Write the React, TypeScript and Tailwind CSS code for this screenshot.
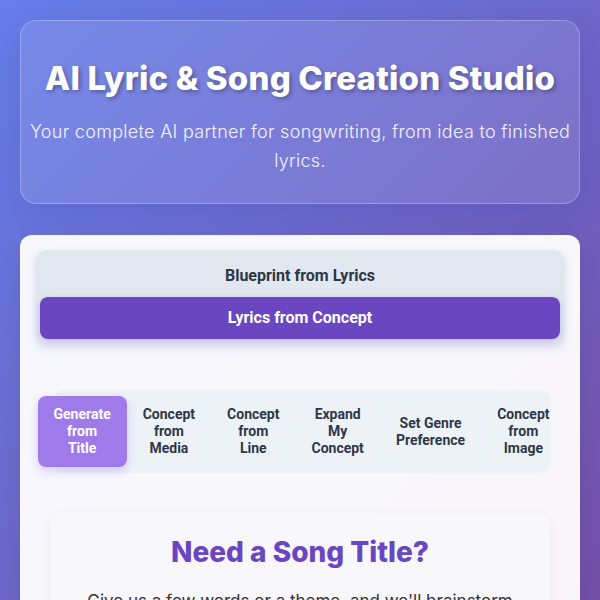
import React from "react";

const modes = ["Blueprint from Lyrics", "Lyrics from Concept"];

const tools = [
  "Generate from Title",
  "Concept from Media",
  "Concept from Line",
  "Expand My Concept",
  "Set Genre Preference",
  "Concept from Image",
];

const toolLines: Record<string, string[]> = {
  "Generate from Title": ["Generate", "from", "Title"],
  "Concept from Media": ["Concept", "from", "Media"],
  "Concept from Line": ["Concept", "from", "Line"],
  "Expand My Concept": ["Expand", "My", "Concept"],
  "Set Genre Preference": ["Set Genre", "Preference"],
  "Concept from Image": ["Concept", "from", "Image"],
};

export default function App() {
  const activeMode = "Lyrics from Concept";
  const activeTool = "Generate from Title";

  return (
    <div className="min-h-screen bg-[linear-gradient(135deg,#667eea_0%,#764ba2_100%)] px-5 pt-5 pb-10 font-['Inter',sans-serif]">
      <header className="rounded-2xl border border-white/25 bg-white/10 px-[6px] pt-[37px] pb-[28px] text-center shadow-[0_8px_32px_rgba(31,38,135,0.15)]">
        <h1 className="text-[33px] font-extrabold leading-[40px] tracking-[0.2px] text-white [text-shadow:2px_2px_4px_rgba(0,0,0,0.3)]">
          AI Lyric &amp; Song Creation Studio
        </h1>
        <p className="mt-[19px] text-[18px] font-light leading-[29px] tracking-[0.3px] text-white/90">
          Your complete AI partner for songwriting, from idea to finished lyrics.
        </p>
      </header>

      <main className="mt-[31px] rounded-xl bg-white/95 p-[15px] shadow-[0_10px_30px_rgba(0,0,0,0.1)]">
        <div className="flex flex-col rounded-xl bg-[#e2e8f0] p-[5px] shadow-[0_4px_10px_rgba(80,60,160,0.15)] font-['Roboto',sans-serif]">
          {modes.map((mode) => (
            <button
              key={mode}
              className={
                mode === activeMode
                  ? "h-[42px] rounded-lg bg-[#6b46c1] text-[16px] font-bold text-white shadow-[0_2px_6px_rgba(107,70,193,0.3)]"
                  : "h-[42px] rounded-lg text-[16px] font-bold text-[#2d3748]"
              }
            >
              {mode}
            </button>
          ))}
        </div>

        <nav className="mx-[17px] mt-[46px] mr-[14px] flex justify-center rounded-xl bg-[#edf2f7] py-[6px] font-['Roboto',sans-serif]">
          <div className="flex shrink-0">
            {tools.map((tool) => (
              <button
                key={tool}
                className={
                  tool === activeTool
                    ? "flex h-[71px] shrink-0 flex-col items-center justify-center rounded-lg bg-[#9f7aea] px-[16px] text-[14px] font-bold leading-[17px] text-white shadow-[0_4px_10px_rgba(159,122,234,0.35)]"
                    : "flex h-[71px] shrink-0 flex-col items-center justify-center px-[16px] text-[14px] font-bold leading-[17px] text-[#2d3748]"
                }
              >
                {toolLines[tool].map((line) => (
                  <span key={line} className="whitespace-nowrap">
                    {line}
                  </span>
                ))}
              </button>
            ))}
          </div>
        </nav>

        <section className="mx-[15px] mt-[40px] rounded-xl bg-[#f8f7fc] px-8 pt-[20px] pb-8 text-center shadow-[0_4px_15px_rgba(0,0,0,0.06)]">
          <h2 className="text-[28px] font-extrabold leading-[38px] text-[#6b46c1]">
            Need a Song Title?
          </h2>
          <p className="mt-[17px] text-[17px] leading-[27px] text-[#333]">
            Give us a few words or a theme, and we'll brainstorm some catchy titles for your next hit.
          </p>
        </section>
      </main>
    </div>
  );
}
